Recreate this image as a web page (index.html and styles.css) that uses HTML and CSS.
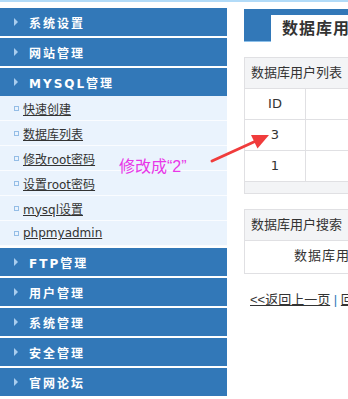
FILE: index.html
```html
<!DOCTYPE html>
<html lang="zh-CN">

<head>
  <meta charset="utf-8">
  <link rel="stylesheet" href="styles.css">
</head>

<body>
  <div class="topLine"></div>
  <div class="wrap">
    <div class="side">
      <div class="menuHead">系统设置</div>
      <div class="menuHead">网站管理</div>
      <div class="menuHead open">MYSQL管理</div>
      <ul class="subMenu">
        <li><a href="#">快速创建</a></li>
        <li><a href="#">数据库列表</a></li>
        <li><a href="#">修改root密码</a></li>
        <li><a href="#">设置root密码</a></li>
        <li><a href="#">mysql设置</a></li>
        <li><a href="#">phpmyadmin</a></li>
      </ul>
      <div class="menuHead">FTP管理</div>
      <div class="menuHead">用户管理</div>
      <div class="menuHead">系统管理</div>
      <div class="menuHead">安全管理</div>
      <div class="menuHead">官网论坛</div>
    </div>

    <div class="main">
      <div class="tabBar">
        <span class="tab">数据库用户管理</span>
      </div>

      <div class="box">
        <div class="boxTitle">数据库用户列表</div>
        <table class="list">
          <tr>
            <td class="idCol">ID</td>
            <td>用户名</td>
            <td>操作</td>
          </tr>
          <tr>
            <td class="idCol">3</td>
            <td>test</td>
            <td>修改 删除</td>
          </tr>
          <tr>
            <td class="idCol">1</td>
            <td>root</td>
            <td>修改 删除</td>
          </tr>
        </table>
        <div class="boxFoot"></div>
      </div>

      <div class="box">
        <div class="boxTitle">数据库用户搜索</div>
        <div class="searchRow">数据库用户名：<input type="text"></div>
      </div>

      <p class="back"><a href="#">&lt;&lt;返回上一页</a> <span class="sep">|</span> <a href="#">回到首页</a></p>
    </div>
  </div>

  <div class="noteText">修改成“2”</div>
  <svg class="noteArrow" width="348" height="399" viewBox="0 0 348 399">
    <line x1="212" y1="161" x2="256" y2="141" stroke="#f03c3c" stroke-width="3" stroke-linecap="round" />
    <polygon points="269,135 257.5,148.5 251,135" fill="#f03c3c" />
  </svg>
</body>

</html>
```

FILE: styles.css
```css
body {
  margin: 0;
  padding: 0;
  width: 348px;
  height: 399px;
  overflow: hidden;
  position: relative;
  font-family: "DejaVu Sans", "Noto Sans CJK SC", sans-serif;
  font-size: 12px;
  color: #333;
  background: #fff;
}

.topLine {
  height: 2px;
  background: #b2dbf8;
}

.wrap {
  display: flex;
  padding-top: 6px;
}

.side {
  flex: 0 0 227px;
}

.menuHead {
  display: flex;
  align-items: center;
  height: 28px;
  margin-bottom: 2px;
  padding-left: 14px;
  background: #3278b8;
  color: #fff;
  font-weight: bold;
  font-size: 12px;
  letter-spacing: 2px;
}

.menuHead::before {
  content: "";
  width: 0;
  height: 0;
  margin-right: 11px;
  border-left: 4px solid #a9cdee;
  border-top: 4px solid transparent;
  border-bottom: 4px solid transparent;
}

.menuHead.open {
  margin-bottom: 0;
}

.subMenu {
  list-style: none;
  margin: 0 0 2px 0;
  padding: 0;
  background: #eaf3fd;
}

.subMenu li {
  display: flex;
  align-items: center;
  height: 24px;
  padding-left: 14px;
  border-bottom: 1px solid #fafcff;
}

.subMenu li::before {
  content: "";
  width: 3px;
  height: 3px;
  margin-right: 4px;
  border: 1px solid #94bde6;
}

.subMenu a {
  color: #333;
  text-decoration: underline;
}

.main {
  flex: 0 0 560px;
  margin-left: 17px;
  padding-top: 1px;
}

.tabBar {
  display: flex;
  align-items: flex-end;
  height: 32px;
  padding-left: 27px;
  background: #3278b8;
  border-bottom: 1px solid #8cc0ea;
}

.tab {
  height: 27px;
  line-height: 27px;
  margin-bottom: -1px;
  padding-left: 11px;
  width: 300px;
  background: #fff;
  font-size: 16px;
  font-weight: bold;
  letter-spacing: 1px;
  color: #333;
}

.box {
  margin-top: 15px;
  border: 1px solid #e0e0e3;
}

.box:first-of-type {
  margin-top: 16px;
}

.boxTitle {
  height: 30px;
  line-height: 30px;
  padding-left: 6px;
  background: #f3f4f6;
  border-bottom: 1px solid #e0e0e3;
  font-size: 13px;
  color: #333;
}

.list {
  width: 100%;
  border-collapse: separate;
  border-spacing: 0;
}

.list td {
  padding: 0;
  line-height: 30px;
  text-align: center;
  font-size: 13px;
  border-bottom: 1px solid #e0e0e3;
  border-right: 1px solid #e0e0e3;
}

.list td.idCol {
  width: 60px;
}

.boxFoot {
  height: 11px;
  background: #f3f4f6;
}

.searchRow {
  height: 32px;
  line-height: 30px;
  padding-left: 49px;
  font-size: 13px;
  letter-spacing: 1px;
}

.searchRow input {
  width: 120px;
  height: 18px;
  border: 1px solid #ccc;
  vertical-align: middle;
}

.back {
  margin: 17px 0 0 6px;
  font-family: "Liberation Sans", "Noto Sans CJK SC", sans-serif;
  font-size: 13px;
  line-height: 17px;
}

.back a {
  color: #333;
  text-decoration: underline;
}

.back .sep {
  color: #3278b8;
}

.noteText {
  position: absolute;
  left: 119px;
  top: 156px;
  font-family: "Liberation Sans", "Noto Sans CJK SC", sans-serif;
  font-size: 16px;
  line-height: 22px;
  color: #e836e8;
}

.noteArrow {
  position: absolute;
  left: 0;
  top: 0;
}
```
